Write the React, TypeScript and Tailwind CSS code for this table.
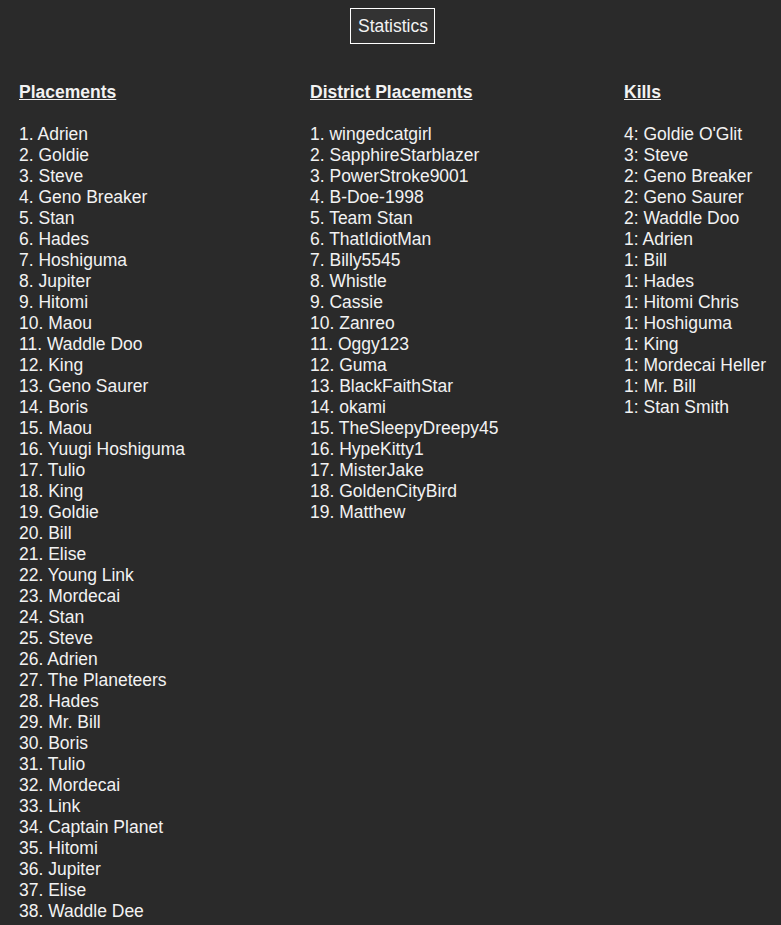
import React from "react";

const placements = [
  "Adrien","Goldie","Steve","Geno Breaker","Stan","Hades","Hoshiguma","Jupiter","Hitomi","Maou",
  "Waddle Doo","King","Geno Saurer","Boris","Maou","Yuugi Hoshiguma","Tulio","King","Goldie","Bill",
  "Elise","Young Link","Mordecai","Stan","Steve","Adrien","The Planeteers","Hades","Mr. Bill","Boris",
  "Tulio","Mordecai","Link","Captain Planet","Hitomi","Jupiter","Elise","Waddle Dee",
];

const district = [
  "wingedcatgirl","SapphireStarblazer","PowerStroke9001","B-Doe-1998","Team Stan","ThatIdiotMan",
  "Billy5545","Whistle","Cassie","Zanreo","Oggy123","Guma","BlackFaithStar","okami",
  "TheSleepyDreepy45","HypeKitty1","MisterJake","GoldenCityBird","Matthew",
];

const kills = [
  "4: Goldie O'Glit","3: Steve","2: Geno Breaker","2: Geno Saurer","2: Waddle Doo","1: Adrien",
  "1: Bill","1: Hades","1: Hitomi Chris","1: Hoshiguma","1: King","1: Mordecai Heller","1: Mr. Bill","1: Stan Smith",
];

function Column({ title, items }: { title: string; items: string[] }) {
  return (
    <div className="flex flex-col">
      <div className="font-bold underline h-[21px]">{title}</div>
      <div className="h-[21px]" />
      {items.map((t, i) => (
        <div key={i} className="h-[21px] whitespace-nowrap">{t}</div>
      ))}
    </div>
  );
}

export default function App() {
  return (
    <div
      className="min-h-[925px] bg-[#2a2a2a] text-[#f2f2f2] text-[17.5px] leading-[21px] overflow-hidden"
      style={{ fontFamily: '"Liberation Sans", Arial, sans-serif' }}
    >
      <div className="flex justify-center pt-[8px]">
        <div className="ml-[4px] border border-white bg-[#333333] pl-[7px] pr-[6px] h-[36px] flex items-center text-[17.5px]">
          Statistics
        </div>
      </div>
      <div className="grid grid-cols-[291px_314px_1fr] pl-[19px] mt-[38px]">
        <Column title="Placements" items={placements.map((p, i) => `${i + 1}. ${p}`)} />
        <Column title="District Placements" items={district.map((p, i) => `${i + 1}. ${p}`)} />
        <Column title="Kills" items={kills} />
      </div>
    </div>
  );
}
